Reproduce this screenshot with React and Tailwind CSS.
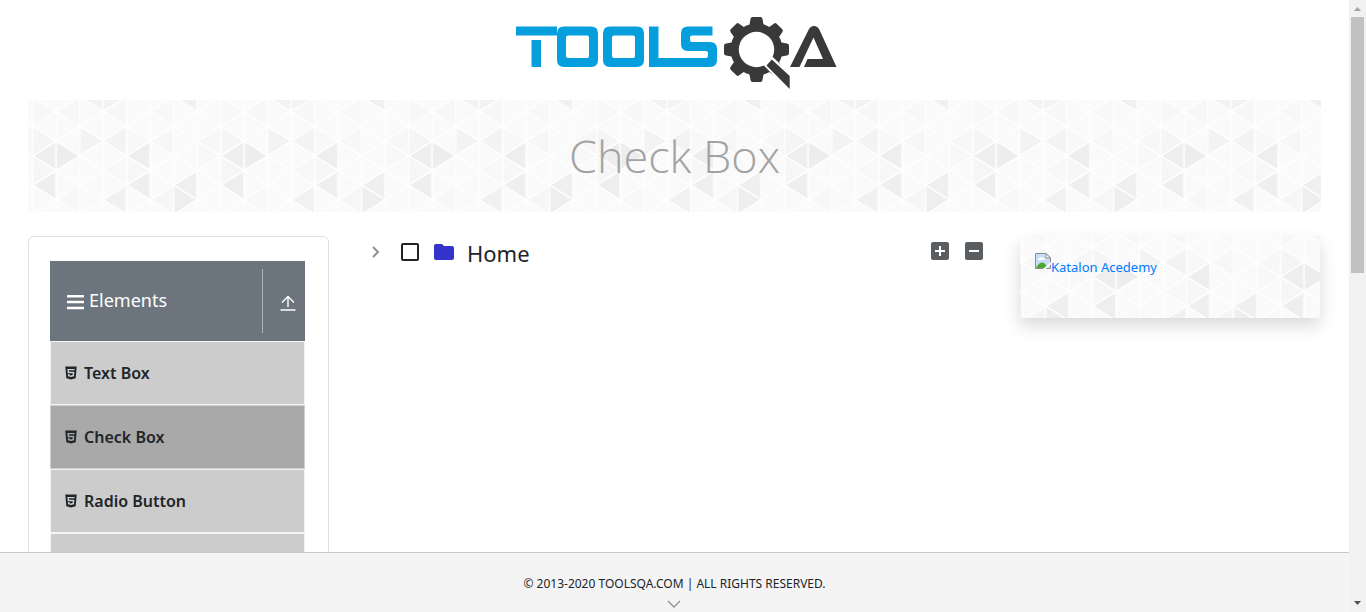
import React from 'react';
import { MdAddBox, MdIndeterminateCheckBox, MdFolder } from 'react-icons/md';
import { AiFillHtml5 } from 'react-icons/ai';

const COL = 23.5;
const ROW = 29.4;

// Column-apex row of each tinted triangle; the rest use the base tint.
const shades = {
  '0-4': '#eeeeee', '1-4': '#ededed', '0-3': '#f5f5f5', '0-5': '#f6f6f6',
  '0-6': '#eeeeee', '2-3': '#f3f3f3', '3-3': '#f3f3f3', '4-4': '#eeeeee',
  '4-6': '#efefef', '3-7': '#f1f1f1', '6-6': '#efefef', '6-7': '#eeeeee',
  '6-0': '#f0f0f0', '3-0': '#f3f3f3', '2-0': '#f3f3f3', '7-4': '#f8f8f8',
  '1-1': '#f7f7f7', '3-1': '#f7f7f7', '5-1': '#f8f8f8', '5-3': '#f7f7f7',
  '4-5': '#f7f7f7', '1-7': '#f8f8f8', '5-7': '#f6f6f6', '7-3': '#f7f7f7',
  '0-1': '#f8f8f8', '4-3': '#f8f8f8', '3-5': '#f8f8f8',
};

function Triangles({ id, x, y }) {
  const half = ROW / 2;
  const items = [];
  for (let c = 0; c < 8; c++) {
    for (let r = -1; r < 10; r++) {
      const even = Math.abs(c + r) % 2 === 0;
      const cy = r * half;
      const x0 = c * COL;
      const x1 = x0 + COL;
      const d = even
        ? `M${x0} ${cy}L${x1} ${cy - half}V${cy + half}Z`
        : `M${x1} ${cy}L${x0} ${cy - half}V${cy + half}Z`;
      items.push(
        <path key={`${c}-${r}`} d={d} fill={shades[`${c}-${r}`] || '#fafafa'} stroke="#fefefe" strokeWidth="1.500" strokeLinejoin="round" />
      );
    }
  }
  return (
    <svg className="absolute inset-0 h-full w-full" aria-hidden="true">
      <defs>
        <pattern id={id} width="188" height="120" patternUnits="userSpaceOnUse" patternTransform={`translate(${x} ${y})`}>
          {items}
        </pattern>
      </defs>
      <rect width="100%" height="100%" fill={`url(#${id})`} />
    </svg>
  );
}

function Logo() {
  const teeth = [0, 45, 90, 135, 180, 225, 270, 315];
  return (
    <svg width="325" height="76" viewBox="512 15 325 76" role="img" aria-label="ToolsQA">
      <g fill="#059fdd">
        <path d="M516 26.500H557V35.500H516ZM531.500 40H541V67H531.500Z" />
        <path fillRule="evenodd" d="M564 26.500H591Q598 26.500 598 33.500V60Q598 67 591 67H564Q557 67 557 60V33.500Q557 26.500 564 26.500ZM568 35.500Q566 35.500 566 37.500V56Q566 58 568 58H587Q589 58 589 56V37.500Q589 35.500 587 35.500Z" />
        <path fillRule="evenodd" d="M610 26.500H637Q644 26.500 644 33.500V60Q644 67 637 67H610Q603 67 603 60V33.500Q603 26.500 610 26.500ZM614 35.500Q612 35.500 612 37.500V56Q612 58 614 58H633Q635 58 635 56V37.500Q635 35.500 633 35.500Z" />
        <path d="M649 26.500H658.500V58H706Q708 58 708 56V53Q708 51 706 51H688Q681 51 681 44V33.500Q681 26.500 688 26.500H712.500V35.500H692Q690 35.500 690 37.500V40Q690 42 692 42H710Q717 42 717 49V60Q717 67 710 67H649Z" />
      </g>
      <g fill="#393939">
        {teeth.map((a) => (
          <path key={a} d="M749 27.500L750.500 19Q750.800 17 752.500 17H760.500Q762.200 17 762.500 19L764 27.500Z" transform={`rotate(${a} 756.500 49.500)`} />
        ))}
        <path fillRule="evenodd" d="M756.500 23.500A26 26 0 1 0 756.500 75.500A26 26 0 1 0 756.500 23.500ZM756.500 31.800A17.700 17.700 0 1 1 756.500 67.200A17.700 17.700 0 1 1 756.500 31.800Z" />
        <path d="M763 61L768 56L789.500 76V88.500Z" fill="#ffffff" stroke="#ffffff" strokeWidth="5" />
        <path d="M766.500 65.500L771.800 59.500L789.700 76V89Z" />
        <path d="M790 67L808 31Q810 26 814 26Q818 26 820 31L836.500 67H804L807.500 59H823L813.500 37.500L799.500 67Z" />
      </g>
    </svg>
  );
}

function MenuItem({ label, active }) {
  return (
    <li>
      <a
        href="#"
        className={`flex h-16 items-center gap-[5px] border pl-3 text-base font-semibold text-[#212529] ${active ? 'border-[#cbd0d6] bg-[#a9a9a9]' : 'border-[#f4f4f5] bg-[#cccccc]'}`}
      >
        <AiFillHtml5 className="size-4" />
        {label}
      </a>
    </li>
  );
}

export default function App() {
  return (
    <div className="flex h-screen overflow-hidden bg-white font-['Noto_Sans',sans-serif] text-[#212529]">
      <div className="flex min-w-0 flex-1 flex-col">
        <div className="flex min-h-0 flex-1 flex-col overflow-hidden px-7">
          <header className="flex h-25 shrink-0 justify-center pt-[15px]">
            <a href="#" className="block"><Logo /></a>
          </header>
          <div className="relative flex h-28 shrink-0 items-center justify-center overflow-hidden">
            <Triangles id="banner" x={4.7} y={-3} />
            <h1 className="relative font-['Open_Sans',sans-serif] text-[45px] font-light text-[#a3a3a3]">Check Box</h1>
          </div>

          <div className="mt-6 flex items-start">
            <nav className="w-[301px] shrink-0 rounded-md border border-[#dfdfdf] pt-6 pr-[23px] pb-6 pl-[21px]">
              <div className="flex h-20 items-center bg-[#6c757d] text-white">
                <button type="button" className="flex h-16 flex-1 items-center border-r border-[#b0b3b6] pb-0.5 pl-[17px] text-lg">
                  <svg className="mt-1 mr-[5px]" width="17" height="16" viewBox="0 0 17 16" fill="currentColor" aria-hidden="true">
                    <rect y="1" width="17" height="2.500" rx=".5" />
                    <rect y="6.800" width="17" height="2.500" rx=".5" />
                    <rect y="12.700" width="17" height="2.500" rx=".5" />
                  </svg>
                  Elements
                </button>
                <button type="button" aria-label="Collapse" className="flex w-[42px] justify-center pt-1 pl-2">
                  <svg width="16" height="16" viewBox="0 0 16 16" fill="none" stroke="currentColor" strokeWidth="1.400" aria-hidden="true">
                    <path d="M8 12V1.500M2 7.500L8 1.500L14 7.500M.5 15H15.500" />
                  </svg>
                </button>
              </div>
              <ul>
                <MenuItem label="Text Box" />
                <MenuItem label="Check Box" active />
                <MenuItem label="Radio Button" />
                <MenuItem />
              </ul>
            </nav>

            <main className="flex min-w-0 flex-1 items-start justify-between pr-[34px] pl-[39px]">
              <div className="flex h-8 items-center">
                <button type="button" aria-label="Toggle" className="text-[#8f8f8f]">
                  <svg width="16" height="16" viewBox="0 0 16 16" fill="none" stroke="currentColor" strokeWidth="2" aria-hidden="true">
                    <path d="M5 3L10 8L5 13" />
                  </svg>
                </button>
                <label className="flex items-center text-[22px]">
                  <input type="checkbox" className="ml-[17px] size-[18px] appearance-none rounded-xs border-2 border-[#212529]" />
                  <MdFolder className="mr-[11px] ml-[13px] size-6 text-[#3333cc]" />
                  <span className="pt-0.5">Home</span>
                </label>
              </div>
              <div className="flex gap-2.5 pt-[3px] text-[#5b5e61]">
                <button type="button" aria-label="Expand all"><MdAddBox className="size-6" /></button>
                <button type="button" aria-label="Collapse all"><MdIndeterminateCheckBox className="size-6" /></button>
              </div>
            </main>

            <aside className="relative mr-px h-[82px] w-[300px] shrink-0 shadow-[0_8px_16px_rgba(0,0,0,0.15)]">
              <Triangles id="card" x={72.7} y={-18} />
              <a href="#" className="relative flex pt-[17px] pl-[15px] text-[13px] leading-5 text-[#007bff]">
                <svg width="16" height="16" viewBox="0 0 16 16" aria-hidden="true">
                  <path d="M.5 .5H11L15.500 5V15.500H.5Z" fill="#c9dcf8" stroke="#8d8d8d" />
                  <path d="M11 .5V5H15.500Z" fill="#ffffff" stroke="#8d8d8d" />
                  <path d="M3 7Q3 5 5 5Q6 3 8 5Q10 5 9.500 7Z" fill="#ffffff" />
                  <path d="M1 15Q5 8 9 10L12 13L10 15Z" fill="#50a832" />
                  <path d="M16 9L8 16H10.500L16 11.500Z" fill="#ffffff" />
                </svg>
                <span className="pt-1">Katalon Acedemy</span>
              </a>
            </aside>
          </div>
        </div>

        <footer className="flex h-15 shrink-0 flex-col items-center border-t border-[#c8c8c8] bg-[#f4f4f4] pt-[21px]">
          <p className="text-xs leading-5">© 2013-2020 TOOLSQA.COM | ALL RIGHTS RESERVED.</p>
          <svg className="mt-1 shrink-0" width="16" height="12" viewBox="0 0 16 12" fill="none" stroke="#8f8f8f" strokeWidth="1.300" aria-hidden="true">
            <path d="M1 3L7 9L13 3" />
          </svg>
        </footer>
      </div>

      <div className="flex w-[17px] shrink-0 flex-col items-center bg-[#f1f1f1]" aria-hidden="true">
        <svg width="17" height="17" viewBox="0 0 17 17"><path d="M5 11L8.500 7L12 11Z" fill="#a3a3a3" /></svg>
        <div className="h-64 w-[13px] bg-[#c1c1c1]" />
        <svg className="mt-auto" width="17" height="17" viewBox="0 0 17 17"><path d="M5 6L8.500 10L12 6Z" fill="#505050" /></svg>
      </div>
    </div>
  );
}
